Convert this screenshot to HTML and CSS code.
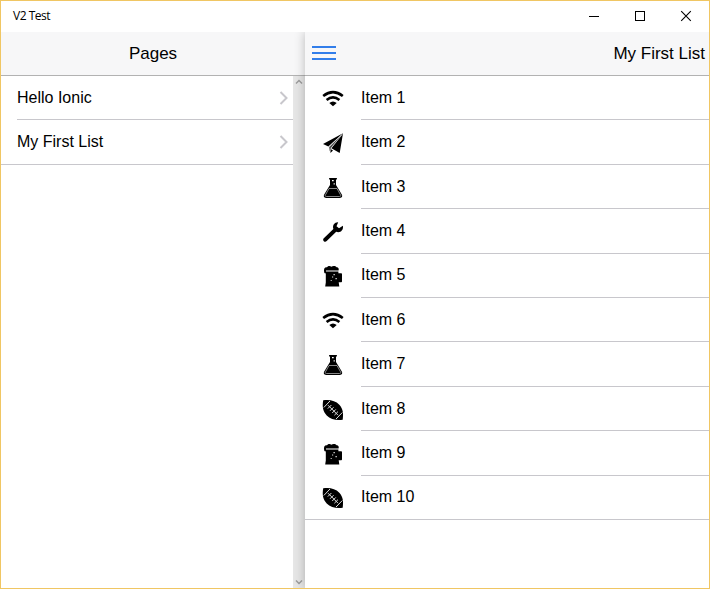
FILE: index.html
```
<!DOCTYPE html>
<html lang="en">
<head>
<meta charset="utf-8">
<title>V2 Test</title>
<link rel="stylesheet" href="styles.css">
</head>
<body>
<svg class="defs" aria-hidden="true">
  <symbol id="wifi" viewBox="0 0 24 24">
    <path d="M2.200 9Q12 1.300 21.800 9M5.600 13Q12 7.800 18.400 13" fill="none" stroke="#000" stroke-width="2.600"/>
    <path d="M8.300 15.900Q12 12.900 15.700 15.900L12 19.300z"/>
  </symbol>
  <symbol id="plane" viewBox="0 0 24 24">
    <path d="M22 2.300L2 13.100l5.400 2.500zM22 2.300L10.400 17.200l8.300 4.900zM9.600 18l2.400 1.400-2.600 2.700z"/>
    <path d="M21.500 3L8.100 16l.6 4.200L10 17z" fill="#555"/>
    <path d="M21.500 3L7.700 15.700M21 3.700L10.200 17.100" stroke="#ddd" stroke-width=".5"/>
  </symbol>
  <symbol id="flask" viewBox="0 0 24 24">
    <path d="M8.100 2h7.800v1.600H15V9l5.800 9.600c1 1.800.2 3.400-1.900 3.400H5.100c-2.100 0-2.900-1.600-1.900-3.400L9 9V3.600h-.9z"/>
    <path d="M11 4h1.700v1.300H11zM12.600 7.200h1.200v1.200h-1.200z" fill="#fff"/>
    <path d="M8 12.500l-3.500 6.300c-.6 1.100-.2 1.700.9 1.700h13.200c1.100 0 1.500-.6.900-1.700L16 12.500z" fill="none" stroke="#aaa" stroke-width=".8"/>
  </symbol>
  <symbol id="wrench" viewBox="0 0 24 24">
    <path d="M21.900 5.700l-3.900 2.500-2.500-2 1.700-3.900c-3.600-.2-6.100 3-4.800 6.700L2.800 18.200c-1.900 2 .9 4.800 2.900 2.900l9.500-9.300c3.900 1.500 7.600-1.700 6.700-6.100z"/>
  </symbol>
  <symbol id="beer" viewBox="0 0 24 24">
    <path d="M3.200 8.500C2.500 4.900 3.500 3 6 3.200c1-1.500 3.300-1.500 4.300-.5 1.500-1.300 4.500-1 5.300.6 1.700-.2 2.600 1.500 2 3.200H5V9L4 9.400zM4.800 7.400h12.600v1.900h2.500c.7 0 1.100.4 1.100 1v7c0 .6-.4 1-1.100 1h-2.200l.6 4.100H4.200l.6-4z"/>
    <path d="M12.500 10h1.300v1.300h-1.300zM11 12.400h1.200v1.200H11zM14.500 14h1.300v1.200h-1.300zM9.700 16h1v1h-1z" fill="#ddd"/>
  </symbol>
  <symbol id="football" viewBox="0 0 24 24">
    <path d="M2.200 2.300C8.500 1.300 14.500 2.600 18.300 6.700S22.600 15.500 21.700 21.700C15.500 22.600 9.500 21.300 5.700 17.400S1.100 8.400 2.200 2.300z"/>
    <path d="M2.800 9.500L9 3M15 21l6.300-6.500M7 7.200l10 10M6.800 10.600l3.600-3.600M9 12.800l3.600-3.600M11.200 15l3.600-3.600M13.400 17.200l3.600-3.600" fill="none" stroke="#ddd" stroke-width="1"/>
  </symbol>
  <symbol id="chevron" viewBox="0 0 10 14">
    <path d="M1.500 1l6 6-6 6" fill="none" stroke="#c8c7cc" stroke-width="2"/>
  </symbol>
</svg>
<div class="window">
  <div class="titlebar">
    <span class="caption">V2 Test</span>
    <div class="controls">
      <svg width="46" height="31" shape-rendering="crispEdges"><path d="M18 15h10v1H18z"/></svg>
      <svg width="46" height="31" shape-rendering="crispEdges"><path d="M18.500 10.500h9v9h-9z" fill="none" stroke="#000"/></svg>
      <svg width="46" height="31"><path d="M18.200 10.200l9.600 9.600M27.800 10.200l-9.600 9.600" stroke="#000" stroke-width="1.100"/></svg>
    </div>
  </div>
  <div class="panes">
    <nav class="side">
      <header class="bar">Pages</header>
      <div class="scroller">
        <ul class="list">
          <li class="item"><div class="inner">Hello Ionic<svg class="chev"><use href="#chevron"/></svg></div></li>
          <li class="item"><div class="inner">My First List<svg class="chev"><use href="#chevron"/></svg></div></li>
        </ul>
        <div class="scrollbar">
          <svg width="8" height="6"><path d="M1 4.500l3-3 3 3" fill="none" stroke="#9b9b9b" stroke-width="1.400"/></svg>
          <svg width="8" height="6"><path d="M1 1.500l3 3 3-3" fill="none" stroke="#9b9b9b" stroke-width="1.400"/></svg>
        </div>
      </div>
    </nav>
    <main class="main">
      <header class="bar mainbar">
        <svg class="menu" width="24" height="14" shape-rendering="crispEdges"><path d="M0 0h24v2H0zM0 6h24v2H0zM0 12h24v2H0z" fill="#327eea"/></svg>
        <span>My First List</span>
      </header>
      <ul class="list">
        <li class="item"><svg class="icon"><use href="#wifi"/></svg><div class="inner">Item 1</div></li>
        <li class="item"><svg class="icon"><use href="#plane"/></svg><div class="inner">Item 2</div></li>
        <li class="item"><svg class="icon"><use href="#flask"/></svg><div class="inner">Item 3</div></li>
        <li class="item"><svg class="icon"><use href="#wrench"/></svg><div class="inner">Item 4</div></li>
        <li class="item"><svg class="icon"><use href="#beer"/></svg><div class="inner">Item 5</div></li>
        <li class="item"><svg class="icon"><use href="#wifi"/></svg><div class="inner">Item 6</div></li>
        <li class="item"><svg class="icon"><use href="#flask"/></svg><div class="inner">Item 7</div></li>
        <li class="item"><svg class="icon"><use href="#football"/></svg><div class="inner">Item 8</div></li>
        <li class="item"><svg class="icon"><use href="#beer"/></svg><div class="inner">Item 9</div></li>
        <li class="item"><svg class="icon"><use href="#football"/></svg><div class="inner">Item 10</div></li>
      </ul>
    </main>
  </div>
</div>
</body>
</html>
```
FILE: styles.css
```
* { box-sizing: border-box; }
body { margin: 0; font: 16px "Liberation Sans", Arial, sans-serif; color: #000; }
svg { display: block; flex: none; }
.defs { display: none; }
.window {
  width: 710px; height: 589px; border: 1px solid #f0c663;
  display: flex; flex-direction: column; background: #fff; overflow: hidden;
}
.titlebar { height: 31px; flex: none; display: flex; justify-content: space-between; }
.caption { padding-left: 12px; font: 12px/30px "Open Sans", sans-serif; letter-spacing: -0.5px; }
.controls { display: flex; }
.panes { flex: 1; min-height: 0; display: flex; overflow: hidden; }
.side { width: 304px; display: flex; flex-direction: column; }
.main { flex: 1; min-width: 0; position: relative; background: #fff; box-shadow: 0 0 10px rgba(0, 0, 0, .25); }
.bar {
  height: 44px; flex: none; display: flex; align-items: center; justify-content: center;
  background: #f7f7f8; border-bottom: 1px solid #b2b2b2; font-size: 17px;
}
.mainbar { justify-content: space-between; padding: 0 4px 0 7px; }
.menu { margin-top: -1px; }
.scroller { flex: 1; display: flex; }
.list { flex: 1; margin: 0; padding: 0; list-style: none; }
.item { height: 44.4px; display: flex; padding-left: 16px; }
.item:last-child { border-bottom: 1px solid #c8c7cc; }
.inner {
  flex: 1; display: flex; align-items: center; justify-content: space-between;
  padding-top: .4px; border-bottom: 1px solid #c8c7cc;
}
.item:last-child .inner { border-bottom: 0; }
.icon { width: 24px; height: 24px; margin: 10.8px 16px 0 0; }
.chev { width: 10px; height: 14px; margin-right: 4px; }
.scrollbar {
  width: 12px; background: #e6e6e6; display: flex; flex-direction: column;
  justify-content: space-between; align-items: center; padding: 3px 0;
}
```
